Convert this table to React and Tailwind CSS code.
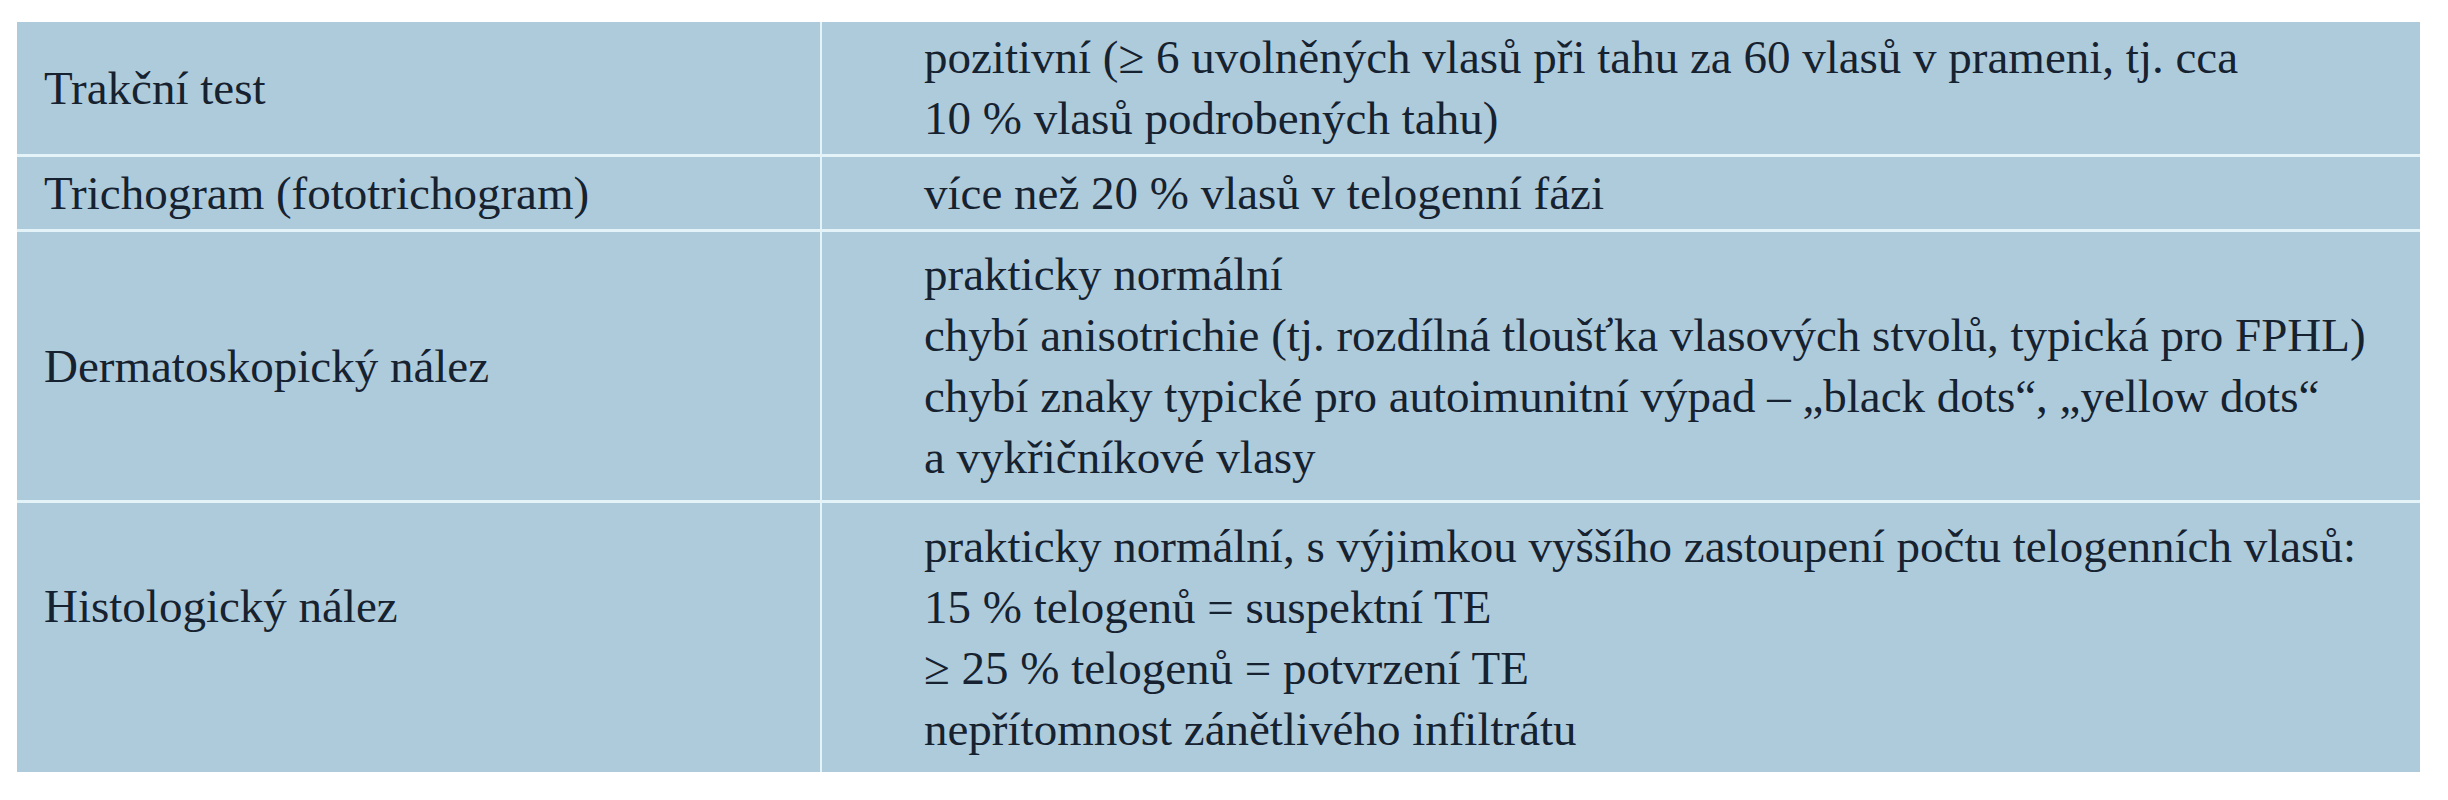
import React from "react";

const rows = [
  {
    label: "Trakční test",
    height: "h-[132px]",
    labelPad: "",
    lines: [
      "pozitivní (≥ 6 uvolněných vlasů při tahu za 60 vlasů v prameni, tj. cca",
      "10 % vlasů podrobených tahu)",
    ],
  },
  {
    label: "Trichogram (fototrichogram)",
    height: "h-[72px]",
    labelPad: "",
    lines: ["více než 20 % vlasů v telogenní fázi"],
  },
  {
    label: "Dermatoskopický nález",
    height: "h-[268px]",
    labelPad: "",
    lines: [
      "prakticky normální",
      "chybí anisotrichie (tj. rozdílná tloušťka vlasových stvolů, typická pro FPHL)",
      "chybí znaky typické pro autoimunitní výpad – „black dots“, „yellow dots“",
      "a vykřičníkové vlasy",
    ],
  },
  {
    label: "Histologický nález",
    height: "h-[269px]",
    labelPad: "pb-[62px]",
    lines: [
      "prakticky normální, s výjimkou vyššího zastoupení počtu telogenních vlasů:",
      "15 % telogenů = suspektní TE",
      "≥ 25 % telogenů = potvrzení TE",
      "nepřítomnost zánětlivého infiltrátu",
    ],
  },
];

export default function App() {
  return (
    <div className="w-[2448px] h-[800px] bg-white pt-[22px] pl-[17px] [font-family:Liberation_Serif,serif] text-[47px] leading-[61px] text-[#16222f]">
      {/* Table */}
      <div className="w-[2403px] grid grid-cols-[803px_1fr] gap-x-[2px] gap-y-[3px] bg-[#e4f3f8]">
        {rows.map((row) => (
          <React.Fragment key={row.label}>
            <div className={`${row.height} ${row.labelPad} bg-[#aecbdc] flex items-center pl-[27px]`}>
              {row.label}
            </div>
            <div className={`${row.height} bg-[#aecbdc] flex flex-col justify-center pl-[102px]`}>
              {row.lines.map((line) => (
                <div key={line} className="whitespace-nowrap">{line}</div>
              ))}
            </div>
          </React.Fragment>
        ))}
      </div>
    </div>
  );
}
